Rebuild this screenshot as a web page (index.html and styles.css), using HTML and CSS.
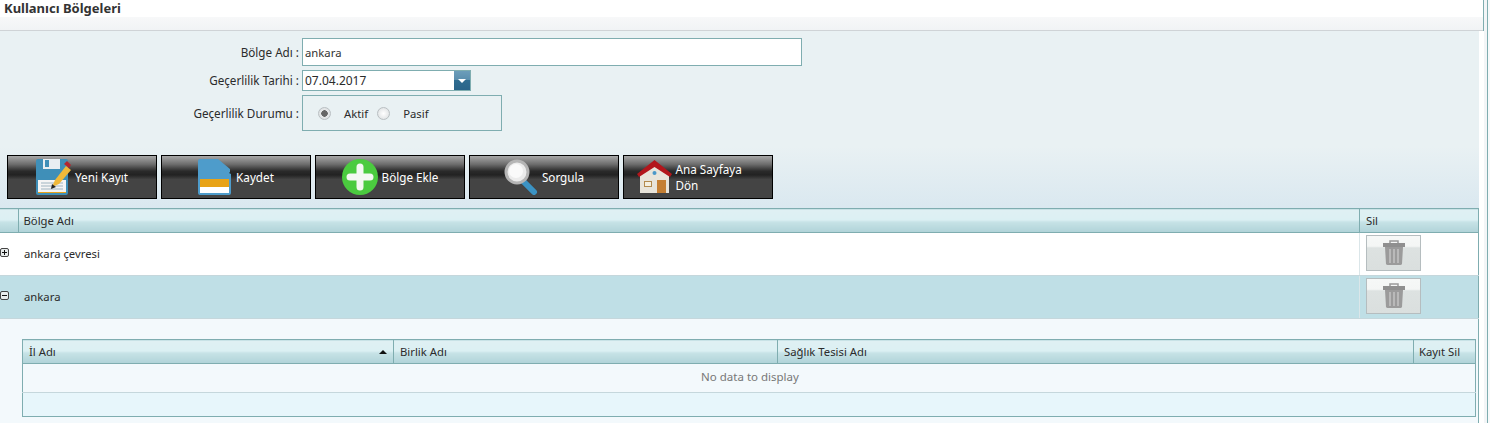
FILE: index.html
```html
<!DOCTYPE html>
<html lang="tr">
<head>
	<meta charset="UTF-8">
	<title>Kullanıcı Bölgeleri</title>
	<link rel="stylesheet" href="styles.css">
</head>
<body>
	<div class="page">
		<div class="content">
			<div class="title_bar">
				<h1>Kullanıcı Bölgeleri</h1>
				<div class="title_strip"></div>
			</div>
			<div class="main">
				<div class="form_area">
					<div class="form_row row_name">
						<label>Bölge Adı :</label>
						<input type="text" class="txt txt_name" value="ankara">
					</div>
					<div class="form_row row_date">
						<label>Geçerlilik Tarihi :</label>
						<div class="date_box">
							<span class="date_val">07.04.2017</span>
							<span class="date_btn"><i></i></span>
						</div>
					</div>
					<div class="form_row row_state">
						<label>Geçerlilik Durumu :</label>
						<div class="state_box">
							<input type="radio" name="state" class="radio" checked>
							<span class="radio_txt">Aktif</span>
							<input type="radio" name="state" class="radio radio_two">
							<span class="radio_txt">Pasif</span>
						</div>
					</div>
					<div class="buttons">
						<a class="btn">
							<svg width="35" height="36" viewBox="0 0 35 36">
								<rect x="0" y="0" width="32" height="36" rx="2" fill="#3f8fb8"/>
								<rect x="7" y="0" width="17" height="10" fill="#e8eef2"/>
								<rect x="9" y="1" width="4" height="7" fill="#3f8fb8"/>
								<rect x="2" y="21" width="28" height="12" fill="#f5f5f5"/>
								<rect x="2" y="33" width="28" height="1" fill="#e9a21a"/>
								<path d="M5 24h22M5 27h22M5 30h22" stroke="#9fb4c0" stroke-width="1"/>
								<path d="M16 28l3-7 11-14 5 4-12 14z" fill="#f0b93a"/>
								<path d="M28 5l3-3 4 4-2 3z" fill="#b5262d"/>
								<path d="M15 30l1-5 4 3z" fill="#222"/>
							</svg>
							<span>Yeni Kayıt</span>
						</a>
						<a class="btn">
							<svg width="34" height="36" viewBox="0 0 34 36">
								<path d="M2 0h18l12 10v3l-1 1 2 1v19a2 2 0 0 1-2 2H2a2 2 0 0 1-2-2V2a2 2 0 0 1 2-2z" fill="#4e9ccb"/>
								<rect x="2" y="20" width="29" height="8" fill="#e8a317"/>
								<rect x="2" y="28" width="29" height="6" fill="#fff"/>
							</svg>
							<span>Kaydet</span>
						</a>
						<a class="btn">
							<svg width="36" height="36" viewBox="0 0 36 36">
								<circle cx="18" cy="18" r="18" fill="#4bcb3f"/>
								<path d="M18 8v20M8 18h20" stroke="#f4f8f2" stroke-width="7" stroke-linecap="round"/>
							</svg>
							<span>Bölge Ekle</span>
						</a>
						<a class="btn">
							<svg width="34" height="36" viewBox="0 0 34 36">
								<path d="M20 23l10 10" stroke="#3b93c4" stroke-width="6" stroke-linecap="round"/>
								<circle cx="13" cy="13" r="11" fill="#ececec" stroke="#b5b5b5" stroke-width="3"/>
								<circle cx="12" cy="12" r="7" fill="#fafafa"/>
							</svg>
							<span>Sorgula</span>
						</a>
						<a class="btn">
							<svg width="35" height="34" viewBox="0 0 35 34">
								<path d="M3 15L17.500 5 32 15v18H3z" fill="#e8e4da"/>
								<path d="M17.500 0L35 14l-2 3L17.500 7 2 17l-2-3z" fill="#b3161c"/>
								<circle cx="17.500" cy="13" r="2" fill="#4a98c9"/>
								<rect x="7" y="21" width="8" height="6" fill="#b38a4d"/>
								<rect x="8" y="22" width="6" height="4" fill="#f4efdf"/>
								<rect x="20" y="20" width="9" height="13" fill="#c57f33"/>
							</svg>
							<span class="btn_wrap">Ana Sayfaya<br>Dön</span>
						</a>
					</div>
				</div>

				<table class="grid">
					<colgroup>
						<col class="col_exp">
						<col>
						<col class="col_sil">
					</colgroup>
					<thead>
						<tr>
							<th></th>
							<th class="head_name">Bölge Adı</th>
							<th>Sil</th>
						</tr>
					</thead>
					<tbody>
						<tr class="data_row">
							<td class="exp_cell"><span class="exp exp_plus"></span></td>
							<td class="name_cell">ankara çevresi</td>
							<td class="sil_cell">
								<a class="del_btn">
									<svg width="22" height="26" viewBox="0 0 22 26">
										<path d="M7 3V1h8v2" fill="none" stroke="#999" stroke-width="1.500"/>
										<rect x="0" y="3" width="22" height="4" fill="#8f8f8f"/>
										<path d="M2 7h18l-1 17a2 2 0 0 1-2 1H5a2 2 0 0 1-2-1z" fill="#9b9b9b"/>
										<path d="M7 9v14M11 9v14M15 9v14" stroke="#c4c4c4" stroke-width="1.500"/>
									</svg>
								</a>
							</td>
						</tr>
						<tr class="data_row row_sel">
							<td class="exp_cell"><span class="exp"></span></td>
							<td class="name_cell">ankara</td>
							<td class="sil_cell">
								<a class="del_btn">
									<svg width="22" height="26" viewBox="0 0 22 26">
										<path d="M7 3V1h8v2" fill="none" stroke="#999" stroke-width="1.500"/>
										<rect x="0" y="3" width="22" height="4" fill="#8f8f8f"/>
										<path d="M2 7h18l-1 17a2 2 0 0 1-2 1H5a2 2 0 0 1-2-1z" fill="#9b9b9b"/>
										<path d="M7 9v14M11 9v14M15 9v14" stroke="#c4c4c4" stroke-width="1.500"/>
									</svg>
								</a>
							</td>
						</tr>
						<tr class="detail_row">
							<td colspan="3">
								<table class="sub_grid">
									<colgroup>
										<col class="sub_il">
										<col class="sub_birlik">
										<col>
										<col class="sub_sil">
									</colgroup>
									<thead>
										<tr>
											<th><div class="sort_head">İl Adı<i class="sort_up"></i></div></th>
											<th>Birlik Adı</th>
											<th>Sağlık Tesisi Adı</th>
											<th class="head_kayit">Kayıt Sil</th>
										</tr>
									</thead>
									<tbody>
										<tr><td colspan="4" class="no_data">No data to display</td></tr>
										<tr><td colspan="4" class="sub_foot"></td></tr>
									</tbody>
								</table>
							</td>
						</tr>
					</tbody>
				</table>
			</div>
		</div>
		<div class="rail"></div>
	</div>
</body>
</html>
```

FILE: styles.css
```css
* {
	box-sizing: border-box;
}
html, body {
	margin: 0;
	height: 423px;
	overflow: hidden;
	background: #fff;
}
body {
	font-family: "Noto Sans", "Liberation Sans", sans-serif;
	font-size: 11.3px;
	color: #2b2b2b;
}
.page {
	display: flex;
	height: 423px;
}
.content {
	width: 1484px;
	flex: none;
}
.rail {
	width: 6px;
	background: linear-gradient(90deg, #f3f5f7 3px, #7fadb0 3px, #7fadb0 4px, #f7f9fa 4px);
}

/* title */
.title_bar {
	height: 31px;
	border-right: 1px solid #7fadb0;
}
.title_bar h1 {
	margin: 0;
	height: 17px;
	padding-left: 4px;
	font-size: 13px;
	line-height: 17px;
	font-weight: bold;
	color: #333;
}
.title_strip {
	height: 14px;
	background: linear-gradient(#f7f8f9, #f1f3f5);
	border-bottom: 1px solid #cfd3d6;
}

.main {
	width: 1479px;
}

/* form */
.form_area {
	height: 177px;
	padding-top: 7px;
	background: linear-gradient(#e9f1f3 65%, #dae8f0);
}
.form_row {
	display: flex;
	align-items: center;
}
.form_row label {
	width: 299px;
	text-align: right;
	margin-right: 3px;
	padding-bottom: 1px;
	font-size: 11.7px;
}
.row_name {
	height: 28px;
}
.row_date {
	height: 21px;
	margin-top: 4px;
}
.row_state {
	height: 36px;
	margin-top: 4px;
}
.txt {
	border: 1px solid #7fadb0;
	outline: none;
	font: inherit;
	color: #333;
	padding: 0 2px;
	background: #fff;
}
.txt_name {
	width: 500px;
	height: 28px;
}
.date_box {
	width: 169px;
	height: 21px;
	border: 1px solid #7fadb0;
	background: #fff;
	display: flex;
	align-items: center;
	justify-content: space-between;
	padding: 0 0 0 2px;
}
.date_val {
	font-size: 12px;
}
.date_btn {
	width: 16px;
	height: 19px;
	background: linear-gradient(#6c9dba, #5b8fae 45%, #2f6c90 50%, #2a6489);
	display: flex;
	align-items: center;
	justify-content: center;
}
.date_btn i {
	border-left: 4px solid transparent;
	border-right: 4px solid transparent;
	border-top: 4px solid #fff;
}
.state_box {
	width: 200px;
	height: 36px;
	border: 1px solid #7fadb0;
	display: flex;
	align-items: center;
	padding-left: 15px;
}
.radio {
	appearance: none;
	width: 13px;
	height: 13px;
	margin: 0 13px 0 0;
	border: 1px solid #b9bfc2;
	border-radius: 50%;
	background: radial-gradient(circle, #fff, #d8dcde);
}
.radio:checked {
	background: radial-gradient(circle, #666 0, #666 3px, #e6e8e9 3.500px, #d8dcde);
}
.radio_two {
	margin-left: 9px;
}

/* buttons */
.buttons {
	display: flex;
	gap: 4px;
	padding-left: 7px;
	margin-top: 24px;
}
.btn {
	width: 150px;
	height: 44px;
	border: 1px solid #000;
	background: linear-gradient(#a8a8a8, #6c6c6c 20%, #2a2a2a 36%, #222 45%, #444 56%, #444);
	color: #fff;
	display: flex;
	align-items: center;
	justify-content: center;
	gap: 4px;
	font-size: 11.7px;
	line-height: 16px;
}
.btn_wrap {
	width: 84px;
}

/* grid */
table {
	border-collapse: collapse;
	table-layout: fixed;
	width: 100%;
}
.grid {
	background: #fff;
}
.col_exp {
	width: 18px;
}
.col_sil {
	width: 119px;
}
th {
	font-weight: normal;
	text-align: left;
	padding: 0 0 0 6px;
	background: linear-gradient(#dff0f3, #dcf0f3 45%, #c6e2e6 55%, #b0d3d8);
	border: 1px solid #7fadb0;
}
.grid > thead th {
	height: 24px;
}
.grid > thead th:first-child {
	border-left: 0;
}
.grid > thead .head_name {
	padding-left: 5px;
}
.sub_grid .head_kayit {
	padding-left: 5px;
}
.data_row td {
	height: 43px;
	padding: 0 0 0 6px;
	border-bottom: 1px solid #c5d7dc;
}
.data_row .name_cell {
	padding-bottom: 2px;
}
.data_row .sil_cell {
	border-left: 1px solid #dbe6e9;
	border-right: 1px solid #7fadb0;
	padding: 0 0 3px 6px;
}
.data_row .exp_cell {
	padding: 0;
}
.row_sel td {
	background: #bfdfe6;
}
.exp {
	display: block;
	width: 9px;
	height: 9px;
	margin: -4px 0 0 0;
	border: 1px solid #444;
	border-radius: 2px;
	background: linear-gradient(#111, #111) center / 5px 1px no-repeat, #e8ecec;
}
.exp_plus {
	background: linear-gradient(#111, #111) center / 5px 1px no-repeat, linear-gradient(#111, #111) center / 1px 5px no-repeat, #e8ecec;
}
.del_btn {
	width: 55px;
	height: 36px;
	border: 1px solid #b5bdbf;
	background: linear-gradient(#f6f8f7, #f4f6f5 30%, #dde2e1 35%, #dadfde);
	display: flex;
	align-items: center;
	justify-content: center;
}

/* detail */
.detail_row > td {
	background: #f3f9fc;
	height: 104px;
	padding: 20px 2px 7px 22px;
	vertical-align: top;
	border-right: 1px solid #7fadb0;
}
.sub_grid td {
	padding: 0;
	border: 0;
}
.sub_il {
	width: 371px;
}
.sub_birlik {
	width: 384px;
}
.sub_sil {
	width: 62px;
}
.sub_grid th {
	height: 24px;
}
.sort_head {
	display: flex;
	align-items: center;
	justify-content: space-between;
	padding-right: 6px;
}
.sort_up {
	border-left: 4px solid transparent;
	border-right: 4px solid transparent;
	border-bottom: 4px solid #111;
}
.sub_grid .no_data {
	height: 29px;
	padding: 0 0 3px 2px;
	text-align: center;
	color: #777;
	font-size: 11.5px;
	background: #f3f9fc;
	border-left: 1px solid #7fadb0;
	border-right: 1px solid #7fadb0;
	border-bottom: 1px solid #c5d7dc;
}
.sub_grid .sub_foot {
	height: 24px;
	background: #e7f6fb;
	border: 1px solid #7fadb0;
	border-top: 0;
}
```
